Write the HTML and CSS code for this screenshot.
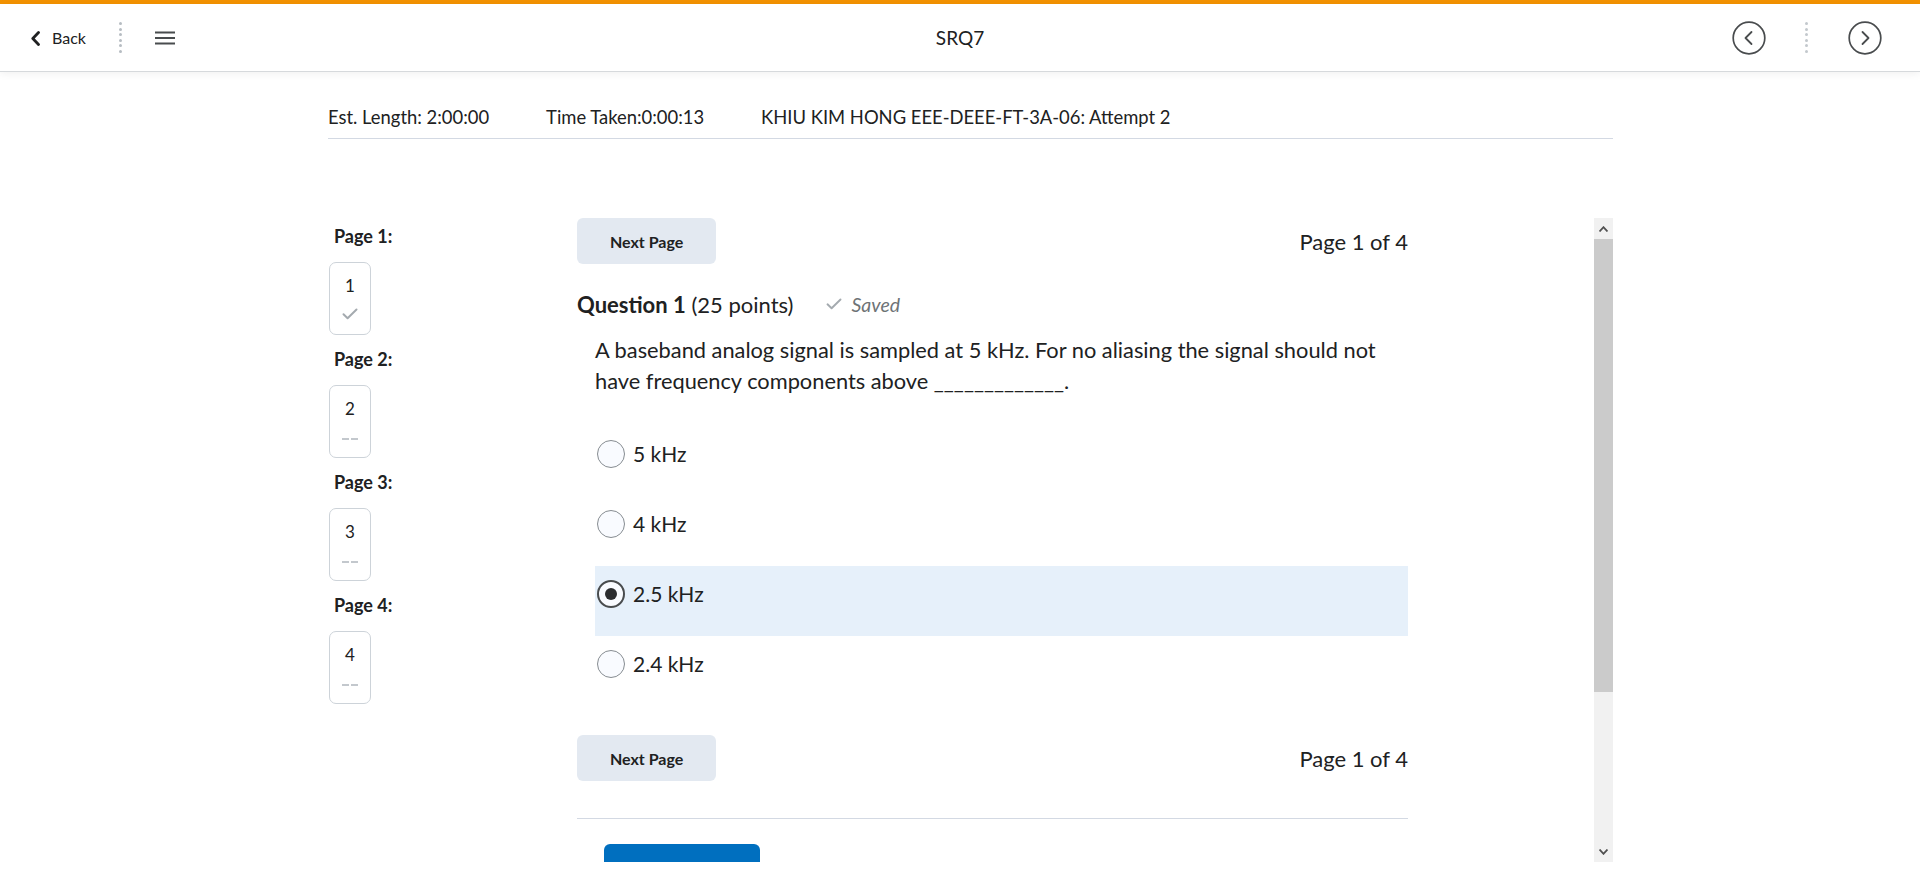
FILE: index.html
```html
<!DOCTYPE html>
<html lang="en">
<head>
<meta charset="utf-8">
<title>SRQ7</title>
<link rel="stylesheet" href="styles.css">
</head>
<body>
<div class="topline"></div>
<header class="navbar">
  <div class="nav-left">
    <a class="back">
      <svg width="11" height="15" viewBox="0 0 11 15"><path d="M8.5 1.5 L2.8 7.5 L8.5 13.5" fill="none" stroke="#202122" stroke-width="2.8" stroke-linecap="round" stroke-linejoin="round"/></svg>
      <span>Back</span>
    </a>
    <span class="vdots"><i></i><i></i><i></i><i></i><i></i><i></i></span>
    <svg class="burger" width="20" height="14" viewBox="0 0 20 14"><rect x="0" y="0.5" width="20" height="2" fill="#494c4e"/><rect x="0" y="6" width="20" height="2" fill="#494c4e"/><rect x="0" y="11.5" width="20" height="2" fill="#494c4e"/></svg>
  </div>
  <div class="nav-title">SRQ7</div>
  <div class="nav-right">
    <svg width="34" height="34" viewBox="0 0 34 34"><circle cx="17" cy="17" r="15.8" fill="none" stroke="#494c4e" stroke-width="1.7"/><path d="M19.5 11 L13.5 17 L19.5 23" fill="none" stroke="#494c4e" stroke-width="1.8" stroke-linecap="round" stroke-linejoin="round"/></svg>
    <span class="vdots light"><i></i><i></i><i></i><i></i><i></i><i></i></span>
    <svg width="34" height="34" viewBox="0 0 34 34"><circle cx="17" cy="17" r="15.8" fill="none" stroke="#494c4e" stroke-width="1.7"/><path d="M14.5 11 L20.5 17 L14.5 23" fill="none" stroke="#494c4e" stroke-width="1.8" stroke-linecap="round" stroke-linejoin="round"/></svg>
  </div>
</header>

<main class="page">
  <div class="info">
    <span>Est. Length: 2:00:00</span>
    <span>Time Taken:0:00:13</span>
    <span>KHIU KIM HONG EEE-DEEE-FT-3A-06: Attempt 2</span>
  </div>

  <div class="frame">
    <div class="frame-content">
      <nav class="pages">
        <div class="pg-label">Page 1:</div>
        <div class="pg-box">
          <span class="num">1</span>
          <svg class="tick" width="16" height="12" viewBox="0 0 16 12"><path d="M1.5 6.3 L5.6 10.2 L14.5 1.5" fill="none" stroke="#a4aaaf" stroke-width="2" stroke-linecap="round" stroke-linejoin="round"/></svg>
        </div>
        <div class="pg-label">Page 2:</div>
        <div class="pg-box">
          <span class="num">2</span>
          <span class="dash"><i></i><i></i></span>
        </div>
        <div class="pg-label">Page 3:</div>
        <div class="pg-box">
          <span class="num">3</span>
          <span class="dash"><i></i><i></i></span>
        </div>
        <div class="pg-label">Page 4:</div>
        <div class="pg-box">
          <span class="num">4</span>
          <span class="dash"><i></i><i></i></span>
        </div>
      </nav>

      <section class="quiz">
        <div class="pager">
          <button class="btn">Next Page</button>
          <span class="pg-of">Page 1 of 4</span>
        </div>

        <h2 class="q-title"><b>Question 1</b>&nbsp;(25 points)<span class="saved"><svg width="16" height="12" viewBox="0 0 16 12"><path d="M1.5 6.3 L5.6 10.2 L14.5 1.5" fill="none" stroke="#a4aaaf" stroke-width="1.9" stroke-linecap="round" stroke-linejoin="round"/></svg><em>Saved</em></span></h2>

        <p class="q-text">A baseband analog signal is sampled at 5 kHz. For no aliasing the signal should not have frequency components above _____________.</p>

        <div class="options">
          <label class="opt"><span class="radio"></span><span>5 kHz</span></label>
          <label class="opt"><span class="radio"></span><span>4 kHz</span></label>
          <label class="opt selected"><span class="radio on"></span><span>2.5 kHz</span></label>
          <label class="opt"><span class="radio"></span><span>2.4 kHz</span></label>
        </div>

        <div class="pager bottom">
          <button class="btn">Next Page</button>
          <span class="pg-of">Page 1 of 4</span>
        </div>

        <hr class="sep">

        <div class="submit-wrap"><button class="btn-primary" aria-label="Submit Quiz"></button></div>
      </section>
    </div>

    <div class="scrollbar">
      <div class="sb-btn"><svg width="9" height="6" viewBox="0 0 9 6"><path d="M0.5 5.5 L4.5 1.2 L8.5 5.5" fill="none" stroke="#505050" stroke-width="1.8"/></svg></div>
      <div class="sb-track"><div class="sb-thumb"></div></div>
      <div class="sb-btn"><svg width="9" height="6" viewBox="0 0 9 6"><path d="M0.5 0.5 L4.5 4.8 L8.5 0.5" fill="none" stroke="#505050" stroke-width="1.8"/></svg></div>
    </div>
  </div>
</main>
</body>
</html>
```

FILE: styles.css
```css
* { box-sizing: border-box; }
html, body { margin: 0; padding: 0; }
body {
  width: 1920px;
  height: 888px;
  overflow: hidden;
  background: #ffffff;
  font-family: Lato, "Noto Sans", sans-serif;
  color: #202122;
}

.topline { height: 4px; background: #f39200; }

.navbar {
  height: 68px;
  display: grid;
  grid-template-columns: 1fr auto 1fr;
  align-items: center;
  border-bottom: 1px solid #d6d9dc;
  box-shadow: 0 2px 8px rgba(0,0,0,0.06);
  position: relative;
  z-index: 2;
  background: #fff;
}
.nav-left { display: flex; align-items: center; padding-left: 30px; }
.back { display: flex; align-items: center; gap: 11px; font-size: 16px; color: #202122; }
.back svg { margin-top: 1px; }
.vdots { display: flex; flex-direction: column; gap: 2.6px; margin-left: 33px; margin-right: 33px; }
.vdots i { display: block; width: 3px; height: 3px; border-radius: 50%; background: #b6bcc2; }
.vdots.light i { background: #c3c8cd; }
.burger { display: block; }
.nav-title { font-size: 19px; color: #202122; }
.nav-right { display: flex; align-items: center; justify-content: flex-end; padding-right: 38px; }
.nav-right svg { display: block; }
.nav-right .vdots { margin-left: 39px; margin-right: 40px; }

.page { width: 1613px; padding-left: 328px; }

.info {
  display: flex;
  gap: 57px;
  font-size: 18.4px;
  line-height: 24px;
  padding-top: 33px;
  padding-bottom: 9px;
  border-bottom: 1px solid #d3d9e3;
  color: #202122;
}

.frame {
  margin-top: 79px;
  height: 644px;
  display: flex;
}
.frame-content {
  flex: 1;
  display: flex;
  overflow: hidden;
}

.pages { width: 249px; padding-top: 8px; }
.pg-label { font-weight: 700; font-size: 18px; line-height: 20px; margin-left: 6px; margin-bottom: 16px; }
.pg-box {
  width: 42px;
  height: 73px;
  margin-left: 1px;
  margin-bottom: 14px;
  border: 1px solid #cdd3d9;
  border-radius: 7px;
  display: flex;
  flex-direction: column;
  align-items: center;
  padding-top: 13px;
}
.pg-box .num { font-size: 17px; line-height: 20px; color: #202122; }
.pg-box .tick { margin-top: 12px; }
.pg-box .dash { display: flex; gap: 2px; margin-top: 19px; }
.pg-box .dash i { display: block; width: 7px; height: 2px; background: #c3c8cd; }

.quiz { width: 831px; }

.pager { display: flex; align-items: center; justify-content: space-between; height: 46px; }
.btn {
  height: 46px;
  padding: 0 33px;
  border: none;
  border-radius: 6px;
  background: #e3e9f1;
  font-family: Lato, sans-serif;
  font-weight: 700;
  font-size: 16px;
  color: #202122;
}
.pg-of { font-size: 22px; color: #202122; }

.q-title {
  margin: 26px 0 0;
  font-size: 22px;
  line-height: 30px;
  font-weight: 400;
  display: flex;
  align-items: center;
}
.q-title b { font-weight: 700; }
.saved { display: inline-flex; align-items: center; gap: 9px; margin-left: 33px; color: #6e7376; font-size: 19.5px; }
.saved svg { position: relative; top: -1px; }

.q-text {
  margin: 14px 0 0 18px;
  font-size: 21.8px;
  line-height: 31px;
  width: 800px;
}

.options { margin-top: 30px; margin-left: 18px; }
.opt {
  display: flex;
  align-items: flex-start;
  gap: 8px;
  height: 70px;
  padding: 14px 0 0 2px;
  font-size: 21px;
  line-height: 28px;
}
.opt.selected { background: #e6f0fa; }
.radio {
  width: 28px;
  height: 28px;
  border-radius: 50%;
  border: 1px solid #868c91;
  background: #f9fbff;
  display: flex;
  align-items: center;
  justify-content: center;
  flex: none;
}
.radio.on { border: 2px solid #494c4e; }
.radio.on::after { content: ""; width: 12px; height: 12px; border-radius: 50%; background: #2b2d2f; }

.pager.bottom { margin-top: 29px; }

.sep { margin: 37px 0 0; border: none; border-top: 1px solid #d3d9e3; }

.submit-wrap { padding: 25px 0 0 27px; }
.btn-primary {
  display: block;
  width: 156px;
  height: 46px;
  border: none;
  border-radius: 6px;
  background: #006fbf;
}

.scrollbar { width: 19px; display: flex; flex-direction: column; background: #f1f1f1; }
.sb-btn { height: 21px; display: flex; align-items: center; justify-content: center; }
.sb-track { flex: 1; }
.sb-thumb { height: 453px; background: #cbcbcb; }
```
